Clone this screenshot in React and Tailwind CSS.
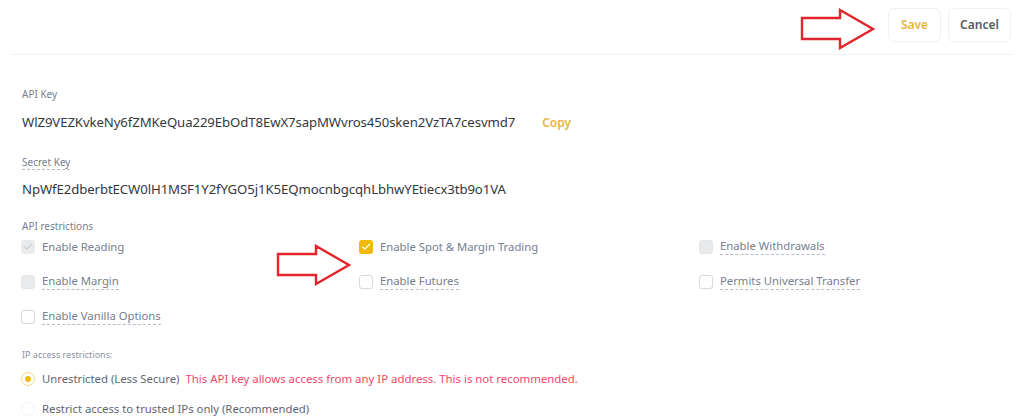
import { Check } from "lucide-react";

const font = { fontFamily: '"Noto Sans", "Open Sans", sans-serif' };

const Arrow = ({ className }) => (
  <svg className={className} width="76" height="42" viewBox="0 0 76 42" fill="none">
    <path
      d="M2 10 H40 V2 L73 21 L40 40 V31 H2 Z"
      fill="white"
      stroke="#e3242b"
      strokeWidth="2.4"
      strokeLinejoin="miter"
    />
  </svg>
);

const Box = ({ state }) => {
  if (state === "on")
    return (
      <span className="w-[14px] h-[14px] rounded-[3px] bg-[#f0b90b] flex items-center justify-center">
        <Check size={10} strokeWidth={3} className="text-white" />
      </span>
    );
  if (state === "locked")
    return (
      <span className="w-[14px] h-[14px] rounded-[3px] bg-[#e9eaec] flex items-center justify-center">
        <Check size={10} strokeWidth={2.5} className="text-[#c2c6cc]" />
      </span>
    );
  if (state === "off")
    return <span className="w-[14px] h-[14px] rounded-[3px] bg-[#e9eaec] border border-[#e3e5e8]" />;
  return <span className="w-[14px] h-[14px] rounded-[3px] bg-white border border-[#d5d8dc]" />;
};

const Option = ({ label, state, tip = true }) => (
  <div className="flex items-center gap-[7px]">
    <Box state={state} />
    <span
      className={`text-[11.3px] text-[#76808f] leading-[16px] ${
        tip ? "border-b border-dashed border-[#b7bdc6]" : ""
      }`}
    >
      {label}
    </span>
  </div>
);

export default function App() {
  return (
    <div className="relative w-full h-[419px] overflow-hidden bg-white" style={font}>
      <div className="flex justify-end gap-[7px] pt-2 pr-[13px]">
        <button className="w-[53px] h-[34px] rounded-md border border-[#eef0f2] text-[12px] font-semibold text-[#e8b53b]">
          Save
        </button>
        <button className="w-[63px] h-[34px] rounded-md border border-[#eef0f2] text-[12px] font-semibold text-[#555b63]">
          Cancel
        </button>
      </div>
      <div className="mx-[11px] mt-[12px] border-t border-[#f1f2f4]" />

      <div className="pl-[22px] pt-[31px] text-[#33383f]">
        <div className="text-[10px] text-[#76808f] h-[16px] leading-[16px]">API Key</div>
        <div className="flex items-center h-[24px] mt-[9px]">
          <span className="text-[13.2px] tracking-[-0.1px]">WlZ9VEZKvkeNy6fZMKeQua229EbOdT8EwX7sapMWvros450sken2VzTA7cesvmd7</span>
          <span className="ml-[27px] text-[12px] font-semibold text-[#e8b53b]">Copy</span>
        </div>
        <div className="mt-[17px] h-[16px] leading-[16px]">
          <span className="text-[10px] text-[#76808f] border-b border-dashed border-[#b7bdc6]">Secret Key</span>
        </div>
        <div className="flex items-center h-[24px] mt-[10px]">
          <span className="text-[13.2px] tracking-[-0.1px]">NpWfE2dberbtECW0lH1MSF1Y2fYGO5j1K5EQmocnbgcqhLbhwYEtiecx3tb9o1VA</span>
        </div>

        <div className="mt-[16px] text-[10px] text-[#76808f] h-[16px] leading-[16px]">API restrictions</div>
        <div className="grid grid-cols-[338px_340px_1fr] grid-rows-[35px_35px_35px] items-center mt-[-5px] -ml-px">
          <Option label="Enable Reading" state="locked" tip={false} />
          <Option label="Enable Spot & Margin Trading" state="on" tip={false} />
          <Option label="Enable Withdrawals" state="off" />
          <Option label="Enable Margin" state="off" />
          <Option label="Enable Futures" state="empty" />
          <Option label="Permits Universal Transfer" state="empty" />
          <Option label="Enable Vanilla Options" state="empty" />
        </div>

        <div className="mt-[13px] text-[9px] text-[#8a929e] h-[16px] leading-[16px]">IP access restrictions:</div>
        <div className="flex items-center gap-[7px] h-[24px] mt-[4px] -ml-px">
          <span className="w-[14px] h-[14px] rounded-full border border-[#f3d58a] flex items-center justify-center">
            <span className="w-[6px] h-[6px] rounded-full bg-[#f0b90b]" />
          </span>
          <span className="text-[11.3px] text-[#5e6673]">Unrestricted (Less Secure)</span>
          <span className="text-[11.4px] text-[#f0456a] ml-[-1px]">
            This API key allows access from any IP address. This is not recommended.
          </span>
        </div>
        <div className="flex items-center gap-[7px] h-[24px] mt-[6px] -ml-px">
          <span className="w-[14px] h-[14px] rounded-full border border-[#f1f2f4]" />
          <span className="text-[11.3px] text-[#5e6673]">Restrict access to trusted IPs only (Recommended)</span>
        </div>
      </div>

      <Arrow className="absolute left-[800px] top-[8px]" />
      <Arrow className="absolute left-[276px] top-[244px]" />
    </div>
  );
}
